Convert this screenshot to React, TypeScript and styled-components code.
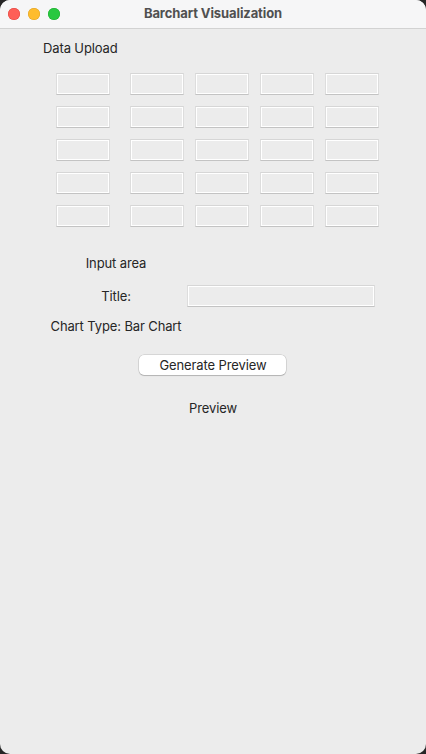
import React from "react";
import styled, { createGlobalStyle } from "styled-components";

const Global = createGlobalStyle`
  html, body { margin: 0; padding: 0; background: #262626; }
  body { width: 426px; height: 754px; overflow: hidden; font-family: Inter, "Noto Sans", "Liberation Sans", sans-serif; }
  * { box-sizing: border-box; }
`;

const Window = styled.div`
  width: 426px;
  height: 754px;
  border-radius: 10px;
  overflow: hidden;
  background: #ececec;
  display: flex;
  flex-direction: column;
`;

const TitleBar = styled.div`
  height: 29px;
  flex: none;
  background: #f6f6f7;
  border-bottom: 1px solid #d2d2d2;
  display: flex;
  align-items: center;
  position: relative;
  padding-left: 8px;
`;

const Lights = styled.div`
  display: flex;
  gap: 8px;
  margin-top: -1px;
`;

const Light = styled.span<{ $c: string; $b: string }>`
  width: 12px;
  height: 12px;
  border-radius: 50%;
  background: ${(p) => p.$c};
  box-shadow: inset 0 0 0 0.5px ${(p) => p.$b};
`;

const TitleText = styled.div`
  position: absolute;
  left: 0;
  right: 0;
  top: 0;
  height: 28px;
  line-height: 27px;
  text-align: center;
  font-size: 13px;
  font-weight: 700;
  color: #505050;
  letter-spacing: -0.1px;
  pointer-events: none;
`;

const Content = styled.div`
  flex: 1;
  display: flex;
  flex-direction: column;
  color: #262626;
  font-size: 13px;
  letter-spacing: -0.12px;
`;

const SectionLabel = styled.div`
  margin: 11px 0 0 43px;
  line-height: 16px;
  height: 16px;
`;

const EntryGrid = styled.div`
  margin: 17px 0 0 56px;
  display: grid;
  grid-template-columns: 63px repeat(4, 54px);
  column-gap: 11px;
  row-gap: 11px;
`;

const Entry = styled.div<{ $w?: number }>`
  width: ${(p) => p.$w ?? 54}px;
  height: 22px;
  background: #ececec;
  border-top: 1px solid #d6d6d6;
  border-left: 1px solid #dddddd;
  border-right: 1px solid #dddddd;
  border-bottom: 1px solid #c3c3c3;
  box-shadow: inset 0 0 0 1px #ffffff;
`;

const Form = styled.div`
  margin-top: 28px;
  display: grid;
  grid-template-columns: auto auto;
  justify-content: center;
  column-gap: 6px;
  align-items: center;
`;

const Label = styled.div<{ $mt?: number; $span?: boolean }>`
  grid-column: ${(p) => (p.$span ? "1 / span 2" : "1")};
  justify-self: center;
  line-height: 16px;
  margin-top: ${(p) => p.$mt ?? 0}px;
`;

const FieldCell = styled.div<{ $mt?: number }>`
  grid-column: 2;
  margin-top: ${(p) => p.$mt ?? 0}px;
`;

const Button = styled.button<{ $mt?: number }>`
  grid-column: 1 / span 2;
  justify-self: center;
  margin-top: ${(p) => p.$mt ?? 0}px;
  width: 147px;
  height: 20px;
  padding: 0;
  border: none;
  border-radius: 5px;
  background: #ffffff;
  box-shadow: 0 0 0 0.5px rgba(0, 0, 0, 0.18), 0 1px 1px rgba(0, 0, 0, 0.16);
  font-family: inherit;
  font-size: 13px;
  letter-spacing: -0.12px;
  color: #262626;
  line-height: 20px;
`;

export default function App() {
  const rows = Array.from({ length: 5 });
  const cols = Array.from({ length: 5 });
  return (
    <>
      <Global />
      <Window>
        <TitleBar>
          <Lights>
            <Light $c="#fe5f57" $b="#e0443e" />
            <Light $c="#febc2e" $b="#dea123" />
            <Light $c="#28c840" $b="#1aab29" />
          </Lights>
          <TitleText>Barchart Visualization</TitleText>
        </TitleBar>
        <Content>
          <SectionLabel>Data Upload</SectionLabel>
          <EntryGrid>
            {rows.map((_, r) => cols.map((_, c) => <Entry key={`${r}-${c}`} />))}
          </EntryGrid>
          <Form>
            <Label>Input area</Label>
            <Label $mt={14}>Title:</Label>
            <FieldCell $mt={14}>
              <Entry $w={188} />
            </FieldCell>
            <Label $mt={11}>Chart Type: Bar Chart</Label>
            <Button $mt={21}>Generate Preview</Button>
            <Label $mt={25} $span>Preview</Label>
          </Form>
        </Content>
      </Window>
    </>
  );
}
